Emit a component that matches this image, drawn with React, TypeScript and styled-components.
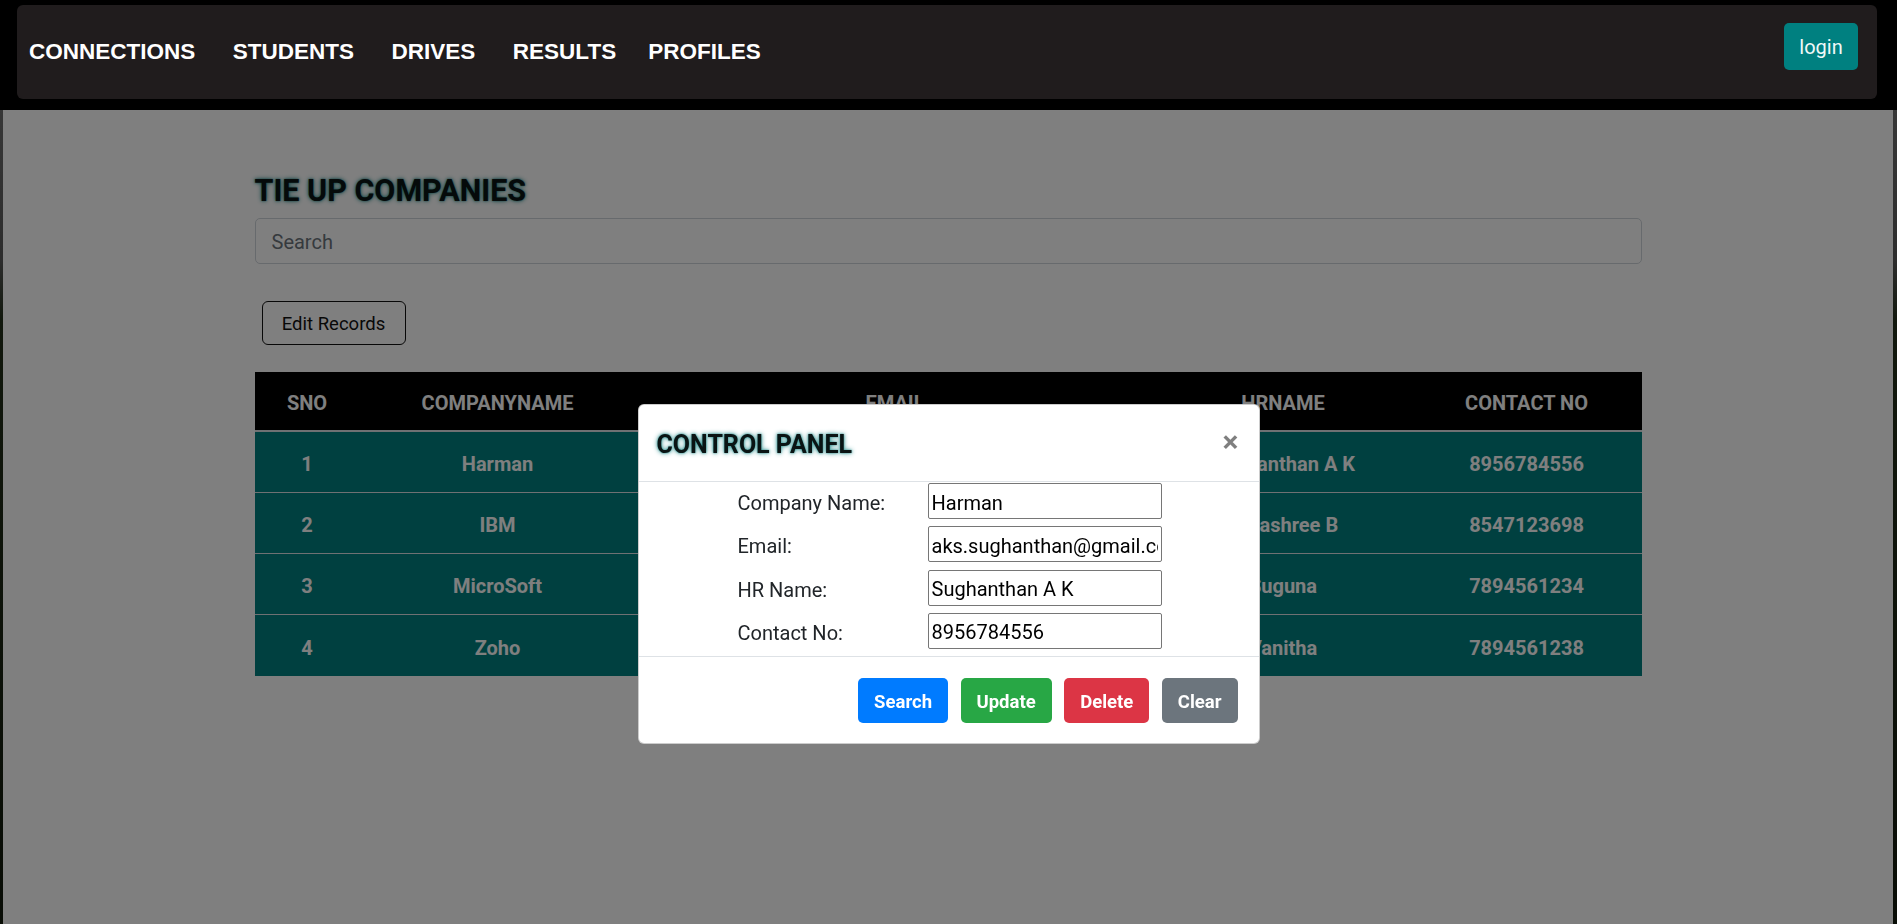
import React from "react";
import styled, { createGlobalStyle } from "styled-components";

const GlobalStyle = createGlobalStyle`
  html, body { margin: 0; padding: 0; }
  body {
    font-family: Roboto, "Segoe UI", "Noto Sans", sans-serif;
    color: #212529;
    background: linear-gradient(to bottom, #000 0, #000 110px, #6e6e6e 110px, #5a5a5a 260px, #23301a 320px, #121a0c 100%);
    min-height: 100vh;
  }
  * { box-sizing: border-box; }
`;

const Shell = styled.div`
  min-height: 100vh;
  display: flex;
  flex-direction: column;
`;

const NavBar = styled.header`
  position: relative;
  z-index: 1100;
  background: #000;
  height: 110px;
  padding: 5px 20px 11px 17px;
`;

const NavInner = styled.nav`
  height: 94px;
  background: #201c1d;
  border-radius: 6px;
  display: flex;
  align-items: center;
  justify-content: space-between;
  padding: 0 19px 0 12px;
`;

const NavLinks = styled.div`
  display: flex;
  align-items: center;
  gap: 37.5px;
`;

const NavLink = styled.a<{ $tight?: boolean }>`
  font-family: "Liberation Sans", Arial, sans-serif;
  font-weight: 700;
  font-size: 22.5px;
  color: #fff;
  text-decoration: none;
  margin-left: ${(p) => (p.$tight ? "-5.5px" : "0")};
`;

const LoginButton = styled.button`
  align-self: flex-start;
  margin-top: 18px;
  width: 74px;
  height: 47px;
  border: none;
  border-radius: 5px;
  background: #008080;
  color: #f0f8f8;
  font-family: Roboto, sans-serif;
  font-size: 20px;
  padding: 0;
`;

const Page = styled.main`
  flex: 1;
  background: #fff;
  margin: 0 4px 0 3px;
  min-height: calc(100vh - 110px);
`;

const Container = styled.div`
  width: 1387px;
  margin: 0 auto;
  padding-top: 63.3px;
  display: flex;
  flex-direction: column;
  align-items: flex-start;
`;

const GlowTitle = styled.h4<{ $size: number }>`
  margin: 0;
  font-family: Roboto, sans-serif;
  font-weight: 700;
  font-size: ${(p) => p.$size}px;
  line-height: 1.2;
  color: #0a1414;
  text-shadow: 0 0 5px #2a8e8e, 0 0 2px #2a8e8e;
`;

const SearchInput = styled.input`
  margin-top: 8px;
  width: 100%;
  height: 46px;
  border: 1px solid #ced4da;
  border-radius: 5px;
  padding: 3px 16px 0;
  font-family: Roboto, sans-serif;
  font-size: 20px;
  color: #495057;
  background: #fff;
  &::placeholder { color: #6c757d; }
`;

const EditButton = styled.button`
  margin: 37px 0 0 7px;
  width: 144px;
  height: 44px;
  border: 1px solid #111;
  border-radius: 6px;
  background: transparent;
  font-family: Roboto, sans-serif;
  font-size: 18.5px;
  color: #111;
  padding: 2px 0 0;
`;

const Table = styled.div`
  margin-top: 27px;
  width: 100%;
  display: flex;
  flex-direction: column;
`;

const cols = "105px 276px 519px 257px 230px";

const HeadRow = styled.div`
  display: grid;
  grid-template-columns: ${cols};
  height: 60px;
  background: #000;
  border-bottom: 2.5px solid #dee2e6;
`;

const HeadCell = styled.div`
  display: flex;
  align-items: center;
  justify-content: center;
  padding-top: 5px;
  color: #fff;
  font-weight: 700;
  font-size: 20px;
`;

const BodyRow = styled.div<{ $last?: boolean }>`
  display: grid;
  grid-template-columns: ${cols};
  height: 61px;
  background: #008080;
  border-bottom: ${(p) => (p.$last ? "none" : "1.25px solid #dee2e6")};
`;

const BodyCell = styled.div`
  display: flex;
  align-items: center;
  justify-content: center;
  padding-top: 5px;
  color: #fff;
  font-weight: 700;
  font-size: 20px;
  white-space: nowrap;
  overflow: hidden;
`;

const Backdrop = styled.div`
  position: fixed;
  inset: 0;
  background: rgba(0, 0, 0, 0.5);
  z-index: 1040;
`;

const Modal = styled.div`
  position: fixed;
  top: 404px;
  left: calc(50% - 311px);
  width: 622px;
  background: #fff;
  border: 1px solid rgba(0, 0, 0, 0.2);
  border-radius: 6px;
  z-index: 1050;
  display: flex;
  flex-direction: column;
`;

const ModalHeader = styled.div`
  height: 77px;
  border-bottom: 1px solid #dee2e6;
  display: flex;
  align-items: center;
  justify-content: space-between;
  padding: 3px 20px 0 18px;
`;

const CloseButton = styled.button`
  border: none;
  background: transparent;
  font-family: Roboto, sans-serif;
  font-weight: 700;
  font-size: 30px;
  line-height: 1;
  color: rgba(0, 0, 0, 0.5);
  padding: 0;
  margin-top: -6px;
`;

const ModalBody = styled.div`
  display: grid;
  grid-template-columns: 192px 234px;
  justify-content: center;
  row-gap: 7.33px;
  padding: 1px 0 7.5px;
`;

const FieldLabel = styled.label`
  display: flex;
  align-items: center;
  padding: 4px 0 0 2px;
  font-size: 20px;
  color: #212529;
`;

const FieldInput = styled.input`
  height: 36px;
  width: 234px;
  border: 1px solid #767676;
  border-radius: 2px;
  padding: 3px 3px 0;
  font-family: Roboto, sans-serif;
  font-size: 20px;
  color: #000;
`;

const ModalFooter = styled.div`
  border-top: 1px solid #dee2e6;
  display: flex;
  justify-content: flex-end;
  gap: 12.5px;
  padding: 21px 21px 20px;
`;

const ActionButton = styled.button<{ $bg: string }>`
  height: 45px;
  padding: 2px 16px 0;
  border: none;
  border-radius: 5px;
  background: ${(p) => p.$bg};
  color: #fff;
  font-family: Roboto, sans-serif;
  font-weight: 700;
  font-size: 18.5px;
`;

const rows = [
  ["1", "Harman", "aks.sughanthan@gmail.com", "Sughanthan A K", "8956784556"],
  ["2", "IBM", "jayashree@ibm.com", "Jayashree B", "8547123698"],
  ["3", "MicroSoft", "suguna@microsoft.com", "Suguna", "7894561234"],
  ["4", "Zoho", "vanitha@zoho.com", "Vanitha", "7894561238"],
];

const fields = [
  ["Company Name:", "Harman"],
  ["Email:", "aks.sughanthan@gmail.com"],
  ["HR Name:", "Sughanthan A K"],
  ["Contact No:", "8956784556"],
];

export default function App() {
  return (
    <Shell>
      <GlobalStyle />
      <NavBar>
        <NavInner>
          <NavLinks>
            <NavLink href="#">CONNECTIONS</NavLink>
            <NavLink href="#">STUDENTS</NavLink>
            <NavLink href="#">DRIVES</NavLink>
            <NavLink href="#">RESULTS</NavLink>
            <NavLink href="#" $tight>PROFILES</NavLink>
          </NavLinks>
          <LoginButton>login</LoginButton>
        </NavInner>
      </NavBar>
      <Page>
        <Container>
          <GlowTitle $size={30.5}>TIE UP COMPANIES</GlowTitle>
          <SearchInput placeholder="Search" />
          <EditButton>Edit Records</EditButton>
          <Table>
            <HeadRow>
              {["SNO", "COMPANYNAME", "EMAIL", "HRNAME", "CONTACT NO"].map((h) => (
                <HeadCell key={h}>{h}</HeadCell>
              ))}
            </HeadRow>
            {rows.map((r, i) => (
              <BodyRow key={r[0]} $last={i === rows.length - 1}>
                {r.map((c, j) => (
                  <BodyCell key={j}>{c}</BodyCell>
                ))}
              </BodyRow>
            ))}
          </Table>
        </Container>
      </Page>
      <Backdrop />
      <Modal>
        <ModalHeader>
          <GlowTitle $size={25}>CONTROL PANEL</GlowTitle>
          <CloseButton aria-label="Close">×</CloseButton>
        </ModalHeader>
        <ModalBody>
          {fields.map(([l, v]) => (
            <React.Fragment key={l}>
              <FieldLabel>{l}</FieldLabel>
              <FieldInput defaultValue={v} />
            </React.Fragment>
          ))}
        </ModalBody>
        <ModalFooter>
          <ActionButton $bg="#007bff">Search</ActionButton>
          <ActionButton $bg="#28a745">Update</ActionButton>
          <ActionButton $bg="#dc3545">Delete</ActionButton>
          <ActionButton $bg="#6c757d">Clear</ActionButton>
        </ModalFooter>
      </Modal>
    </Shell>
  );
}
